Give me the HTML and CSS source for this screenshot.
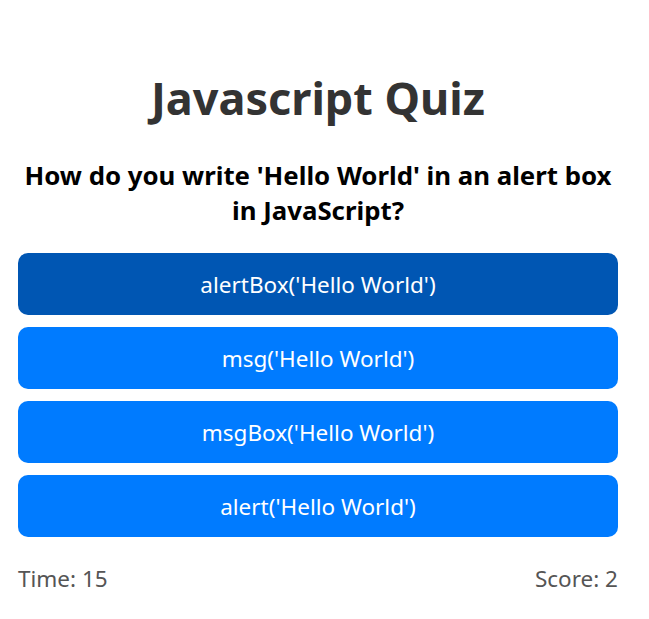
FILE: index.html
```html
<!DOCTYPE html>
<html lang="en">
<head>
<meta charset="utf-8">
<title>Javascript Quiz</title>
<link rel="stylesheet" href="styles.css">
</head>
<body>
<main class="quiz">
  <h1 class="quiz-title">Javascript Quiz</h1>
  <h2 class="question">How do you write 'Hello World' in an alert box in JavaScript?</h2>
  <div class="answers">
    <button class="answer answer-active">alertBox('Hello World')</button>
    <button class="answer">msg('Hello World')</button>
    <button class="answer">msgBox('Hello World')</button>
    <button class="answer">alert('Hello World')</button>
  </div>
  <div class="status">
    <span class="time">Time: 15</span>
    <span class="score">Score: 2</span>
  </div>
</main>
</body>
</html>
```
FILE: styles.css
```css
* { box-sizing: border-box; }
body {
  margin: 0;
  background: #fff;
  font-family: "Noto Sans", "Open Sans", sans-serif;
}
.quiz {
  width: 600px;
  margin-left: 18px;
  padding-top: 68px;
}
.quiz-title {
  margin: 0;
  font-size: 45px;
  line-height: 60px;
  font-weight: 700;
  color: #333;
  text-align: center;
}
.question {
  margin: 30px 0 0;
  font-size: 25.8px;
  line-height: 35px;
  font-weight: 700;
  color: #000;
  text-align: center;
}
.answers {
  margin-top: 25px;
  display: flex;
  flex-direction: column;
  gap: 12px;
}
.answer {
  height: 62px;
  padding: 0;
  border: none;
  border-radius: 10px;
  background: #007bff;
  color: #fff;
  font-family: inherit;
  font-size: 22.5px;
}
.answer-active { background: #0056b3; }
.status {
  margin-top: 27px;
  display: flex;
  justify-content: space-between;
  font-size: 22.5px;
  line-height: 30px;
  color: #555;
}
```
